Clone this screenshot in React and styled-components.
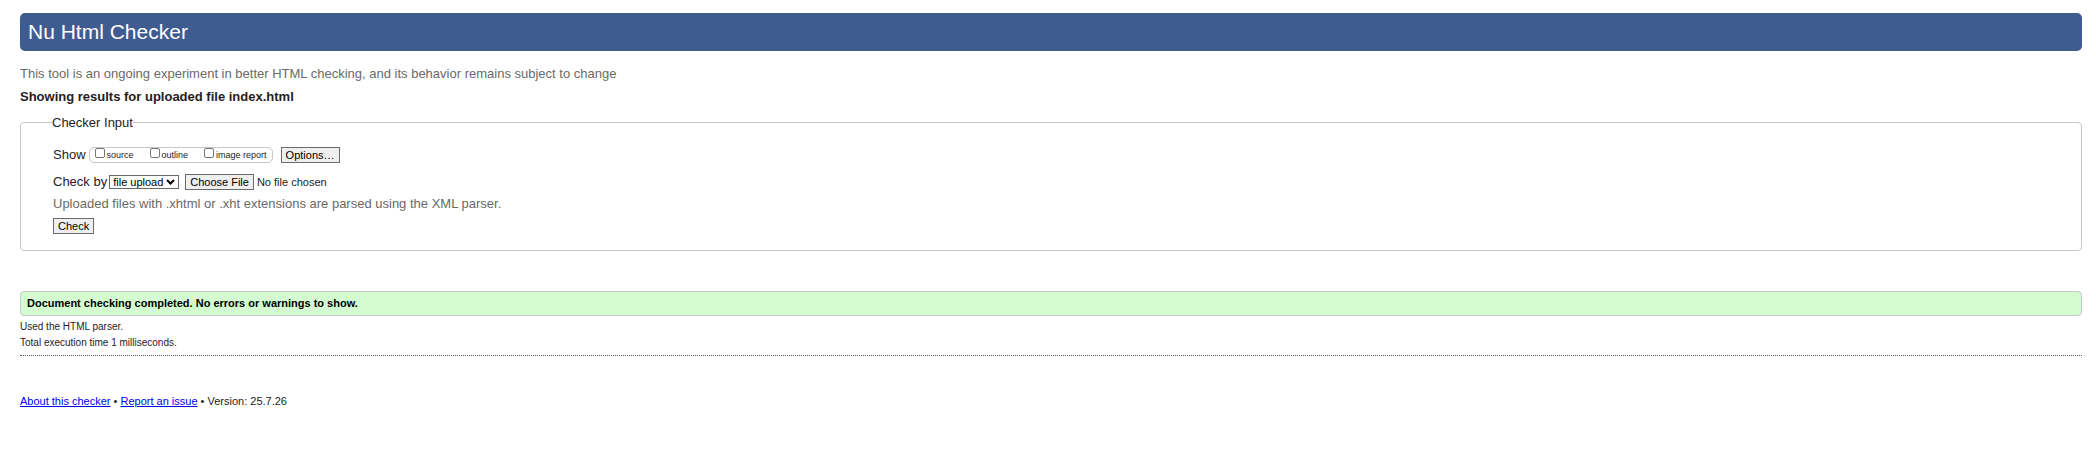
import React from "react";
import styled, { createGlobalStyle, css } from "styled-components";

const GlobalStyle = createGlobalStyle`
  *, *::before, *::after { box-sizing: border-box; }
  body {
    margin: 0;
    background: #fff;
    color: #1f2126;
    font-family: "Liberation Sans", Arial, Helvetica, sans-serif;
    font-size: 13px;
    line-height: 16px;
  }
`;

const Page = styled.div`
  padding: 13px 14px 24px 20px;
`;

const Banner = styled.header`
  display: flex;
  align-items: center;
  height: 38px;
  padding: 0 8px;
  border-radius: 5px;
  background: #3f5c91;
`;

const Title = styled.h1`
  margin: 0;
  color: #fff;
  font-size: 21px;
  font-weight: 400;
  line-height: 24px;
`;

const Muted = styled.p`
  margin: 0;
  color: #696969;
`;

const Intro = styled(Muted)`
  margin-top: 15px;
`;

const ResultsHeading = styled.h2`
  margin: 7px 0 8px;
  font-size: 13px;
  line-height: 16px;
`;

const InputPanel = styled.fieldset`
  min-width: 0;
  margin: 0;
  padding: 15px 32px;
  border: 1px solid #c8c8c8;
  border-radius: 4px;
`;

const Legend = styled.legend`
  margin-left: -1px;
  padding: 2px 0 0;
`;

const Row = styled.div`
  display: flex;
  align-items: center;
  height: 18px;
  margin-bottom: ${(p) => p.$gap || 0}px;
`;

const OptionGroup = styled.div`
  display: flex;
  gap: 16px;
  height: 16px;
  align-items: center;
  margin: 0 8px 0 3px;
  padding: 0 5px;
  border: 1px solid #c8c8c8;
  border-radius: 5px;
`;

const OptionLabel = styled.label`
  display: flex;
  gap: 2px;
  font-size: 9px;
  line-height: 14px;
`;

const Checkbox = styled.input`
  appearance: none;
  width: 10px;
  height: 10px;
  margin: 0;
  border: 1px solid #767676;
  border-radius: 2px;
  background: #fff;
  &:checked { background: #3f5c91; }
`;

const buttonLook = css`
  height: 16px;
  margin: 0;
  padding: 0 4px;
  border: 1px solid #6b6b6b;
  border-radius: 0;
  background: #efefef;
  color: #000;
  font-family: inherit;
  font-size: 11px;
  line-height: 14px;
`;

const Button = styled.button`
  ${buttonLook}
`;

const SelectWrap = styled.span`
  display: inline-grid;
  align-items: center;
  margin: 0 6px 0 2px;
  > * { grid-area: 1 / 1; }
`;

const Select = styled.select`
  appearance: none;
  height: 14px;
  padding: 0 14px 0 3px;
  border: 1px solid #6b6b6b;
  border-radius: 0;
  background: #fff;
  color: #000;
  font-family: inherit;
  font-size: 11px;
  line-height: 12px;
`;

const Chevron = styled.svg`
  justify-self: end;
  width: 9px;
  height: 6px;
  margin-right: 4px;
  pointer-events: none;
`;

const FileInput = styled.input`
  height: 16px;
  font-family: inherit;
  font-size: 11px;
  line-height: 16px;
  &::file-selector-button {
    ${buttonLook}
    margin-right: 3px;
  }
`;

const Success = styled.p`
  margin: 40px 0 3px;
  padding: 3px 6px 4px;
  border: 1px solid #c8c8c8;
  border-radius: 4px;
  background: #d4fcd1;
  color: #000;
  font-size: 11px;
  font-weight: 700;
`;

const Details = styled.p`
  margin: 0;
  font-size: 10px;
  line-height: 16px;
`;

const Divider = styled.hr`
  margin: 4px 0 37px;
  border: 0;
  border-top: 1px dotted #555;
`;

const Footer = styled.footer`
  color: #1f2126;
  font-size: 11px;
`;

const Link = styled.a`
  color: #0000ee;
  text-decoration: underline;
`;

const views = ["source", "outline", "image report"];

export default function App() {
  return (
    <Page>
      <GlobalStyle />
      <Banner>
        <Title>Nu Html Checker</Title>
      </Banner>
      <Intro>
        This tool is an ongoing experiment in better HTML checking, and its behavior remains subject to change
      </Intro>
      <main>
        <ResultsHeading>Showing results for uploaded file index.html</ResultsHeading>
        <form onSubmit={(e) => e.preventDefault()}>
          <InputPanel>
            <Legend>Checker Input</Legend>
            <Row $gap={9}>
              <span>Show</span>
              <OptionGroup role="group" aria-label="Show">
                {views.map((view) => (
                  <OptionLabel key={view}>
                    <Checkbox type="checkbox" name={view} />
                    {view}
                  </OptionLabel>
                ))}
              </OptionGroup>
              <Button type="button">Options…</Button>
            </Row>
            <Row $gap={4}>
              <label htmlFor="method">Check by</label>
              <SelectWrap>
                <Select id="method" defaultValue="file">
                  <option value="address">address</option>
                  <option value="file">file upload</option>
                  <option value="text">text input</option>
                </Select>
                <Chevron viewBox="0 0 9 6" aria-hidden="true">
                  <path d="M1 1 L4.5 4.5 L8 1" fill="none" stroke="#000" strokeWidth="2" />
                </Chevron>
              </SelectWrap>
              <FileInput type="file" aria-label="File to check" />
            </Row>
            <Row $gap={4}>
              <Muted>Uploaded files with .xhtml or .xht extensions are parsed using the XML parser.</Muted>
            </Row>
            <Row>
              <Button type="submit">Check</Button>
            </Row>
          </InputPanel>
        </form>
        <Success>Document checking completed. No errors or warnings to show.</Success>
        <Details>Used the HTML parser.</Details>
        <Details>Total execution time 1 milliseconds.</Details>
      </main>
      <Divider />
      <Footer>
        <Link href="#about">About this checker</Link> • <Link href="#issues">Report an issue</Link> • Version: 25.7.26
      </Footer>
    </Page>
  );
}
